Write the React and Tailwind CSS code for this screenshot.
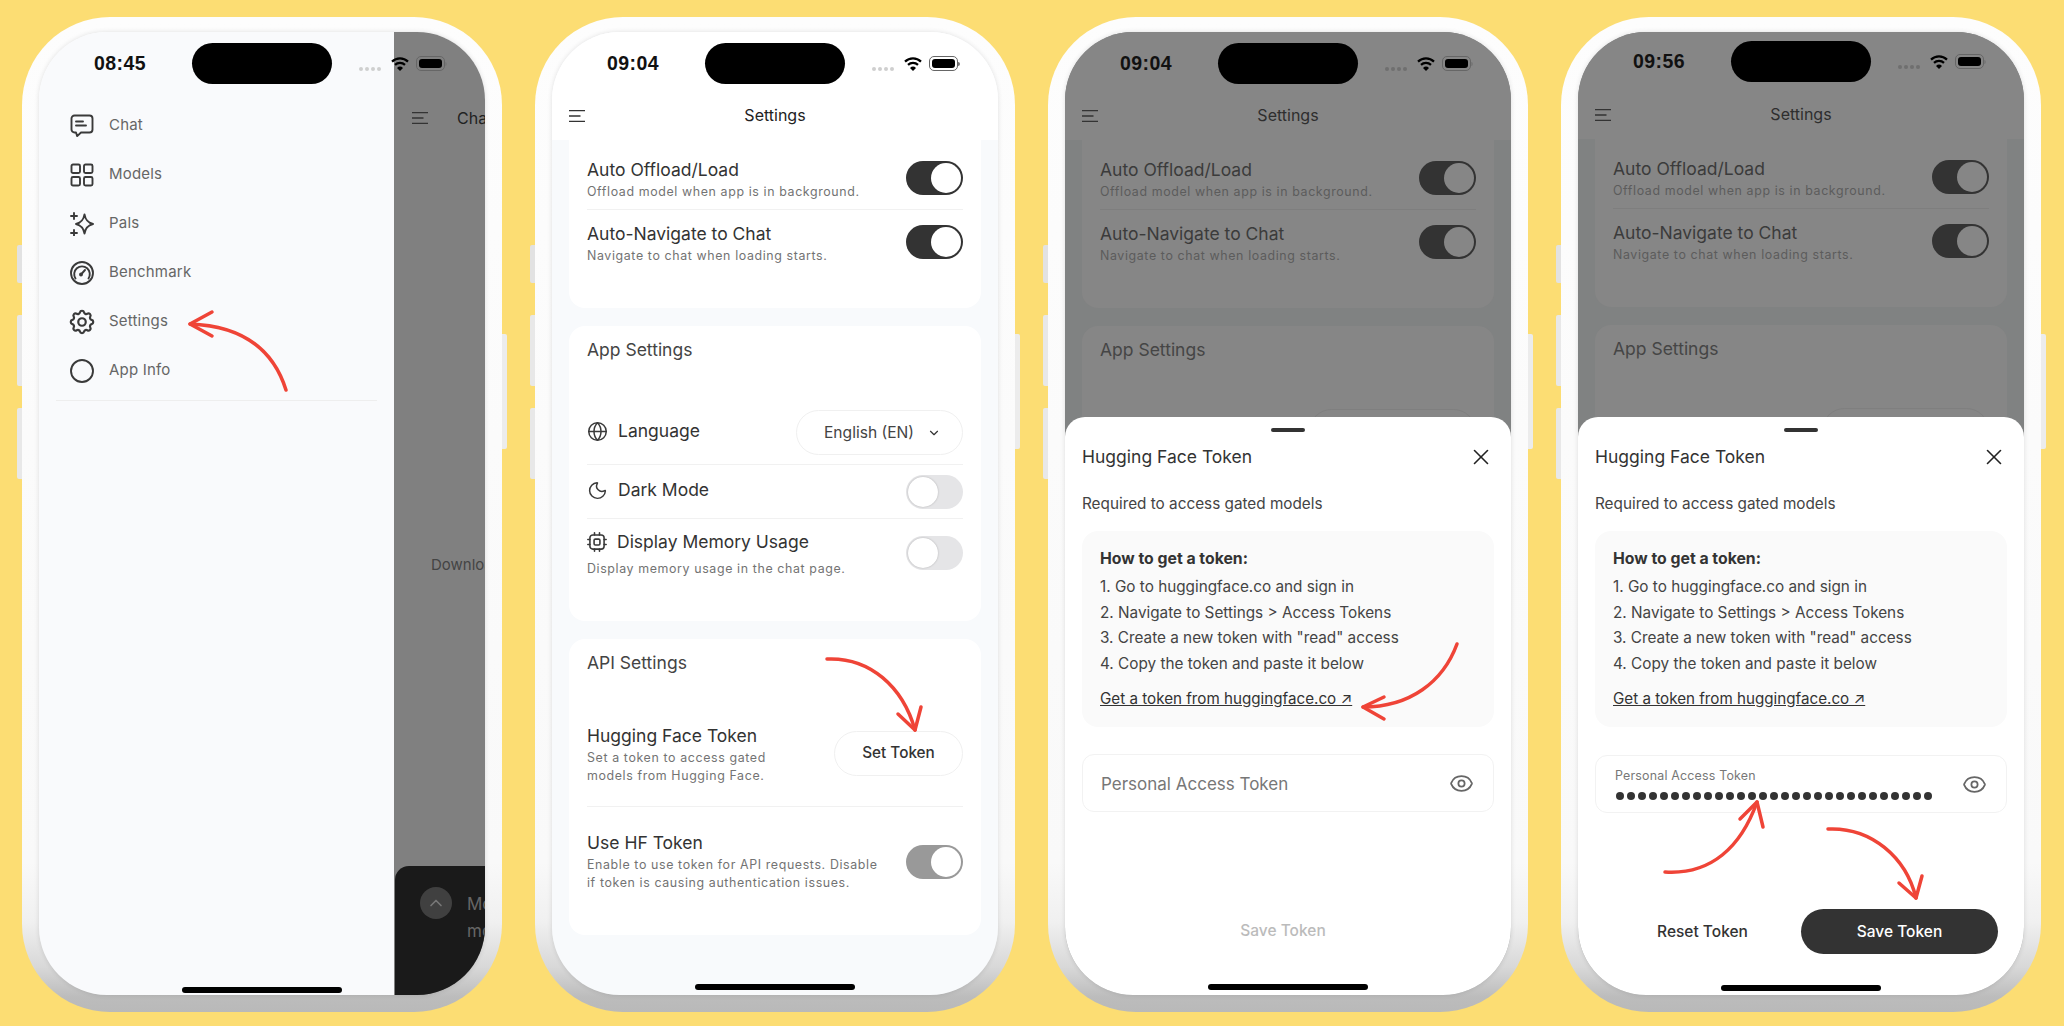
import { Globe, Moon, Eye, X, ChevronDown, ChevronUp } from 'lucide-react';
import { HiOutlineCog } from 'react-icons/hi';

const InkIcon = ({ children, className = 'w-6 h-6' }) => (
  <svg viewBox="0 0 24 24" fill="none" stroke="#3a3a3a" strokeWidth="1.9" strokeLinecap="round" strokeLinejoin="round" className={className}>
    {children}
  </svg>
);

const ChatIcon = () => (
  <InkIcon>
    <path d="M4.5 1.5h15a3 3 0 0 1 3 3v11a3 3 0 0 1-3 3H11l-3.8 3.6-1.2-3.6H4.500a3 3 0 0 1-3-3v-11a3 3 0 0 1 3-3z" />
    <path d="M6 7.500h7M6 11.500h10" />
  </InkIcon>
);

const ModelsIcon = () => (
  <InkIcon>
    <rect x="1.500" y="1.500" width="8.500" height="8.500" rx="1.500" />
    <rect x="14" y="1.500" width="8.500" height="8.500" rx="1.500" />
    <rect x="1.500" y="14" width="8.500" height="8.500" rx="1.500" />
    <rect x="14" y="14" width="8.500" height="8.500" rx="1.500" />
  </InkIcon>
);

const PalsIcon = () => (
  <InkIcon>
    <path d="M14.500 2.500C15.500 8 17.500 10.500 23 12c-5.500 1.500-7.500 4-8.500 9.500C13.500 16 11.500 13.500 6 12c5.500-1.500 7.500-4 8.500-9.500z" />
    <path d="M4 1v6M1 4h6M4 18v6M1 21h6" />
  </InkIcon>
);

const GaugeIcon = () => (
  <InkIcon>
    <circle cx="12" cy="12" r="11" />
    <path d="M5.500 17.500a7.800 7.800 0 1 1 13 0" />
    <path d="M11 13.500l4-4.500" />
    <circle cx="11" cy="13.500" r="1" fill="#3a3a3a" />
  </InkIcon>
);

const CpuIcon = () => (
  <InkIcon className="w-5 h-5">
    <rect x="3.500" y="3.500" width="17" height="17" rx="3.500" />
    <rect x="8.500" y="8.500" width="7" height="7" rx="1.500" />
    <path d="M9 1v2.500M15 1v2.500M9 20.500V23M15 20.500V23M1 9h2.500M1 15h2.500M20.500 9H23M20.500 15H23" />
  </InkIcon>
);

const MenuIcon = () => (
  <svg viewBox="0 0 16 12" fill="none" stroke="#333" strokeWidth="1.300" className="w-4 h-3 shrink-0">
    <path d="M0 .7h16M0 6h11.500M0 11.300h16" />
  </svg>
);

const WifiIcon = () => (
  <svg viewBox="0 0 18 14" fill="none" stroke="#000" strokeWidth="2.200" className="w-[18px] h-[14px]">
    <path d="M1 4.600a11.500 11.500 0 0 1 16 0" />
    <path d="M4 7.900a7.200 7.200 0 0 1 10 0" />
    <path d="M9 14l-3-3a4.300 4.300 0 0 1 6 0z" fill="#000" stroke="none" />
  </svg>
);

const StatusBar = ({ time, up, dim }) => (
  <div className={`absolute inset-x-0 z-30 h-[41px] flex items-center ${up ? 'top-[9px]' : 'top-[11px]'}`}>
    <span className="w-[153px] shrink-0 pl-[55px] text-[19.500px] font-semibold text-[#111] whitespace-nowrap font-['Liberation_Sans',sans-serif] tracking-[0.4px]">{time}</span>
    <div className="w-[140px] h-[41px] shrink-0 rounded-full bg-black" />
    <div className="ml-[27px] mt-[10px] flex gap-[2px] shrink-0">
      {[0, 1, 2, 3].map(i => (
        <span key={i} className={`w-[4px] h-[4px] rounded-full ${dim ? 'bg-[#6f6f6f]' : 'bg-[#cfcfcf]'}`} />
      ))}
    </div>
    <div className="ml-[10px] shrink-0"><WifiIcon /></div>
    <div className="ml-[7px] shrink-0 flex items-center">
      <div className="w-[29px] h-[15px] rounded-[5px] border border-[#666] p-[2px]">
        <div className="w-full h-full rounded-[3px] bg-black" />
      </div>
      <div className="w-[1.500px] h-[4px] bg-[#777] rounded-r-full" />
    </div>
  </div>
);

const Toggle = ({ on, muted, dim, className = '' }) => (
  <div className={`w-[57px] h-[34px] shrink-0 rounded-full p-[2px] flex ${on ? 'justify-end' : 'justify-start'} ${muted ? 'bg-[#999]' : on ? 'bg-[#333]' : 'bg-[#e5e5e7]'} ${className}`}>
    <div className={`w-[30px] h-[30px] rounded-full ${dim ? 'bg-[#868686]' : 'bg-white'} ${on ? '' : 'shadow-[0_0_2px_rgba(0,0,0,.25)]'}`} />
  </div>
);

const RowTitle = ({ children, dim }) => (
  <div className={`text-[17.500px] leading-[22px] whitespace-nowrap ${dim ? 'text-[#3b3b3b]' : 'text-[#333]'}`}>{children}</div>
);

const RowSub = ({ children, dim, className = '' }) => (
  <div className={`text-[12.400px] leading-[18px] tracking-[0.62px] whitespace-nowrap ${dim ? 'text-[#5c5c5c]' : 'text-[#737373]'} ${className}`}>{children}</div>
);

const Card = ({ children, dim, className = '' }) => (
  <div className={`rounded-[16px] px-[18px] ${dim ? 'bg-[#868686]' : 'bg-white'} ${className}`}>{children}</div>
);

const CardHeading = ({ children, dim }) => (
  <div className={`text-[17.500px] leading-[22px] ${dim ? 'text-[#454545]' : 'text-[#444]'}`}>{children}</div>
);

const SettingsScreen = ({ dim, up }) => (
  <div className={`h-full flex flex-col ${dim ? 'bg-[#808282]' : 'bg-[#f8fafc]'}`}>
    {/* header */}
    <div className={`relative shrink-0 flex items-start justify-center pt-[72px] h-[108px] ${dim ? 'bg-[#868686]' : 'bg-white'} ${up ? '-mt-px' : ''}`}>
      <div className="absolute left-[17px] top-[78px]"><MenuIcon /></div>
      <span className={`text-[16px] leading-[22px] ${dim ? 'text-[#2e2e2e]' : 'text-[#222]'}`}>Settings</span>
    </div>
    <div className="flex flex-col gap-[18px] px-[17px]">
      <Card dim={dim} className="rounded-t-none pt-[7px] pb-[32px]">
        <div className={`h-[63px] flex items-center justify-between border-b ${dim ? 'border-[#7e7e7e]' : 'border-[#f1f1f1]'}`}>
          <div className="mt-[4px]">
            <RowTitle dim={dim}>Auto Offload/Load</RowTitle>
            <RowSub dim={dim} className="mt-[2px]">Offload model when app is in background.</RowSub>
          </div>
          <Toggle on dim={dim} />
        </div>
        <div className="h-[66px] flex items-center justify-between">
          <div className="mt-[2px]">
            <RowTitle dim={dim}>Auto-Navigate to Chat</RowTitle>
            <RowSub dim={dim} className="mt-[2px]">Navigate to chat when loading starts.</RowSub>
          </div>
          <Toggle on dim={dim} className="mb-[2px]" />
        </div>
      </Card>

      {/* behind the sheet only the top of this card still shows */}
      {dim ? (
        <Card dim className="pt-[13px] h-[400px]">
          <CardHeading dim>App Settings</CardHeading>
          <div className="mt-[48px] ml-auto w-[167px] h-[45px] rounded-full border border-[#7f7f7f]" />
        </Card>
      ) : (
        <>
          <Card className="pt-[13px] pb-[34px]">
            <CardHeading>App Settings</CardHeading>
            <div className="mt-[40px] h-[64px] flex items-center justify-between border-b border-[#f1f1f1]">
              <div className="flex items-center gap-[10px] mb-[3px]">
                <Globe size={21} strokeWidth={1.7} color="#3a3a3a" />
                <RowTitle>Language</RowTitle>
              </div>
              <div className="w-[167px] h-[45px] rounded-full border border-[#f0f0f0] flex items-center pl-[27px] pr-[21px] justify-between">
                <span className="text-[15.600px] text-[#444] whitespace-nowrap">English (EN)</span>
                <ChevronDown size={14} strokeWidth={2} color="#333" />
              </div>
            </div>
            <div className="h-[54px] flex items-center justify-between border-b border-[#f1f1f1]">
              <div className="flex items-center gap-[10px] mb-[3px]">
                <Moon size={21} strokeWidth={1.7} color="#3a3a3a" />
                <RowTitle>Dark Mode</RowTitle>
              </div>
              <Toggle />
            </div>
            <div className="h-[68px] flex items-center justify-between">
              <div className="mt-[2px]">
                <div className="flex items-center gap-[10px]">
                  <CpuIcon />
                  <RowTitle>Display Memory Usage</RowTitle>
                </div>
                <RowSub className="mt-[7px]">Display memory usage in the chat page.</RowSub>
              </div>
              <Toggle />
            </div>
          </Card>

          <Card className="pt-[13px] pb-[18px]">
            <CardHeading>API Settings</CardHeading>
            <div className="mt-[29px] h-[104px] flex items-center justify-between border-b border-[#f1f1f1]">
              <div>
                <RowTitle>Hugging Face Token</RowTitle>
                <RowSub className="mt-[2px]">Set a token to access gated<br />models from Hugging Face.</RowSub>
              </div>
              <div className="mb-[3px] w-[129px] h-[45px] rounded-full border border-[#f0f0f0] flex items-center justify-center text-[15.300px] font-medium text-[#333]">Set Token</div>
            </div>
            <div className="h-[110px] flex items-center justify-between">
              <div>
                <RowTitle>Use HF Token</RowTitle>
                <RowSub className="mt-[2px]">Enable to use token for API requests. Disable<br />if token is causing authentication issues.</RowSub>
              </div>
              <Toggle on muted />
            </div>
          </Card>
        </>
      )}
    </div>
  </div>
);

const TokenSheet = ({ filled }) => (
  <div className="absolute inset-x-0 bottom-0 top-[385px] z-20 bg-white rounded-t-[20px] flex flex-col">
    <div className="mx-auto mt-[11px] w-[34px] h-[4px] rounded-full bg-[#333] shrink-0" />
    <div className="mt-[13px] px-[17px] flex items-center justify-between h-[24px]">
      <span className="text-[17.500px] leading-[24px] text-[#333]">Hugging Face Token</span>
      <X size={26} strokeWidth={1.500} color="#222" />
    </div>
    <p className="mt-[25px] px-[17px] text-[15.300px] leading-[20px] text-[#444]">Required to access gated models</p>
    <div className="mt-[17px] mx-[17px] rounded-[16px] bg-[#fafafa] px-[18px] pt-[17px] pb-[17px]">
      <div className="text-[15.800px] leading-[22px] font-bold text-[#333]">How to get a token:</div>
      <div className="mt-[4px] text-[15.300px] leading-[25.500px] text-[#444]">
        <div>1. Go to huggingface.co and sign in</div>
        <div>2. Navigate to Settings &gt; Access Tokens</div>
        <div>3. Create a new token with "read" access</div>
        <div>4. Copy the token and paste it below</div>
      </div>
      <div className="mt-[12px] text-[15.200px] leading-[22px] text-[#333] underline">Get a token from huggingface.co ↗</div>
    </div>
    <div className={`mt-[27px] mx-[17px] h-[58px] rounded-[12px] border border-[#f2f2f2] flex items-center justify-between pr-[19px] ${filled ? 'translate-y-px pl-[19px]' : 'pl-[18px]'}`}>
      {filled ? (
        <div className="mb-[1px]">
          <div className="text-[12.400px] leading-[16px] text-[#777] tracking-[0.2px]">Personal Access Token</div>
          <div className="mt-[8px] flex gap-[3px] pl-[1px]">
            {Array.from({ length: 29 }).map((_, i) => (
              <span key={i} className="w-[8px] h-[8px] rounded-full bg-[#333]" />
            ))}
          </div>
        </div>
      ) : (
        <span className="mt-[3px] text-[17px] text-[#777]">Personal Access Token</span>
      )}
      <Eye size={25} strokeWidth={1.700} color="#666" />
    </div>
    {filled ? (
      <div className="mt-[97px] px-[26px] flex">
        <div className="flex-1 h-[45px] flex items-center justify-center text-[15.500px] font-medium text-[#333]">Reset Token</div>
        <div className="flex-1 h-[45px] rounded-full bg-[#333] flex items-center justify-center text-[15.500px] font-medium text-white">Save Token</div>
      </div>
    ) : (
      <div className="mt-[96px] pr-[10px] h-[45px] flex items-center justify-center text-[15.500px] font-medium text-[#bbb]">Save Token</div>
    )}
  </div>
);

const drawerItems = [
  ['Chat', <ChatIcon />],
  ['Models', <ModelsIcon />],
  ['Pals', <PalsIcon />],
  ['Benchmark', <GaugeIcon />],
  ['Settings', <HiOutlineCog size={30} strokeWidth={1.750} color="#3a3a3a" className="shrink-0" />],
  ['App Info', <svg viewBox="0 0 24 24" fill="none" stroke="#3a3a3a" strokeWidth="1.900" className="w-6 h-6"><circle cx="12" cy="12" r="11" /></svg>],
];

const DrawerScreen = () => (
  <div className="h-full flex">
    <div className="w-[355px] shrink-0 bg-[#f9fafc] px-[17px] pt-[69px]">
      {drawerItems.map(([label, icon]) => (
        <div key={label} className="h-[49px] flex items-center pl-[14px] gap-[15px]">
          <span className="w-6 h-6 flex items-center justify-center shrink-0">{icon}</span>
          <span className="text-[15px] text-[#666] tracking-[0.2px]">{label}</span>
        </div>
      ))}
      <div className="mt-[5px] h-px bg-[#eeeeee]" />
    </div>
    <div className="flex-1 min-w-0 bg-[#808080] flex flex-col whitespace-nowrap">
      <div className="pt-[75px] pl-[18px] flex items-center gap-[29px]">
        <MenuIcon />
        <span className="text-[16px] leading-[22px] text-[#222]">Chat</span>
      </div>
      <div className="mt-[425px] pl-[37px] text-[15px] leading-[22px] text-[#444]">Download a model</div>
      <div className="mt-auto h-[129px] ml-px rounded-tl-[14px] bg-[#1a1a1a] pl-[25px] pt-[21px] flex gap-[15px]">
        <div className="w-[32px] h-[32px] rounded-full bg-[#404040] flex items-center justify-center shrink-0">
          <ChevronUp size={20} strokeWidth={2} color="#777" />
        </div>
        <div className="text-[17px] leading-[27px] text-[#666] mt-[4px]">
          <div>Model not</div>
          <div>models</div>
        </div>
      </div>
    </div>
  </div>
);

// coordinates are in the phone frame's own 480x995 space
const Arrows = ({ list }) => (
  <svg viewBox="0 0 480 995" fill="none" stroke="#ef4437" strokeWidth="3.500" strokeLinecap="round" strokeLinejoin="round" className="absolute inset-0 w-[480px] h-[995px] z-40 pointer-events-none">
    {list.map((d, i) => <path key={i} d={d} />)}
  </svg>
);

const Phone = ({ children, arrows }) => (
  <div className="relative w-[480px] h-[995px] shrink-0 rounded-[88px] pt-[15px] px-[17px] pb-[17px] bg-[linear-gradient(to_bottom,#fdfdfd_0%,#f9f9f9_85%,#f0f0f0_91%,#d8d8d8_95.500%,#bcbcbc_98.500%,#b9b9b9_100%)]">
    <div className="absolute left-[-5px] top-[228px] w-[5px] h-[38px] rounded-l-[2px] bg-[#e2e2e2]" />
    <div className="absolute left-[-5px] top-[298px] w-[5px] h-[71px] rounded-l-[2px] bg-[#e8e8e8]" />
    <div className="absolute left-[-5px] top-[391px] w-[5px] h-[71px] rounded-l-[2px] bg-[#e8e8e8]" />
    <div className="absolute right-[-5px] top-[317px] w-[5px] h-[115px] rounded-r-[2px] bg-[#ececec]" />
    <div className="relative h-full rounded-[68px] overflow-hidden shadow-[0_0_5px_rgba(0,0,0,.12)]">
      {children}
    </div>
    {arrows && <Arrows list={arrows} />}
  </div>
);

const HomeBar = ({ className }) => (
  <div className={`absolute left-1/2 -translate-x-1/2 z-30 w-[160px] h-[6px] rounded-full bg-black ${className}`} />
);

const App = () => {
  return (
    <div className="w-[2064px] h-[1026px] overflow-hidden bg-[#fcdd73] pt-[17px] pl-[22px] flex gap-[33px] font-['Inter',sans-serif]">
      <Phone arrows={['M264 373C252 335 223 309 168 307', 'M190 295L168 307L190 319']}>
        <StatusBar time="08:45" />
        <DrawerScreen />
        <HomeBar className="bottom-[2px]" />
      </Phone>

      <Phone arrows={['M292 642C335 640 368 670 380 713', 'M363 697L380 713L386 690']}>
        <StatusBar time="09:04" />
        <SettingsScreen />
        <HomeBar className="bottom-[5px]" />
      </Phone>

      <Phone arrows={['M409 627C395 665 362 690 315 690', 'M336 680L315 690L336 702']}>
        <StatusBar time="09:04" dim />
        <SettingsScreen dim />
        <TokenSheet />
        <HomeBar className="bottom-[5px]" />
      </Phone>

      <Phone arrows={['M104 855C150 858 180 830 196 785', 'M179 802L196 785L202 810', 'M267 812C310 810 345 840 355 881', 'M338 866L355 881L361 859']}>
        <StatusBar time="09:56" up dim />
        <SettingsScreen dim up />
        <TokenSheet filled />
        <HomeBar className="bottom-[4px]" />
      </Phone>
    </div>
  );
};

export default App;
